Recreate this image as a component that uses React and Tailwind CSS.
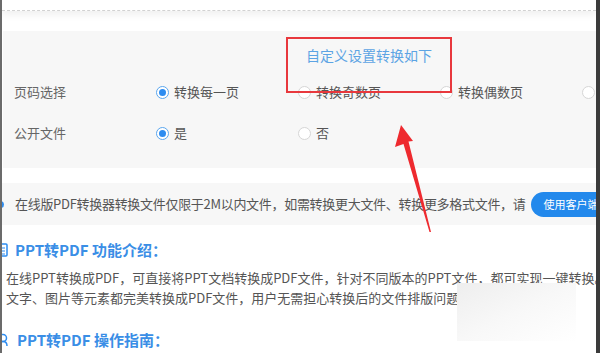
import React from 'react';

const font = { fontFamily: '"Noto Sans CJK SC", "Noto Sans", sans-serif' };

const Radio = ({ checked, label }) => (
  <div className="flex items-center w-[142px] shrink-0">
    <span
      className={`w-[13px] h-[13px] rounded-full border flex items-center justify-center bg-white shrink-0 ${
        checked ? 'border-[#5aa6ee]' : 'border-[#d6d6d6]'
      }`}
    >
      {checked && <span className="w-[7px] h-[7px] rounded-full bg-[#2d8cf0]" />}
    </span>
    <span className="ml-[5px] text-[13px] text-[#555]">{label}</span>
  </div>
);

const Row = ({ label, options }) => (
  <div className="flex items-center h-[30px] pl-[11px]">
    <div className="w-[142px] shrink-0 text-[13px] text-[#666]">{label}</div>
    {options.map((o, i) => (
      <Radio key={i} checked={o.checked} label={o.label} />
    ))}
  </div>
);

const App = () => {
  return (
    <div className="relative w-[600px] h-[353px] overflow-hidden bg-white flex" style={font}>
      <div className="w-[2px] bg-[#6b6b6b] shrink-0" />
      <div className="flex-1 flex flex-col overflow-hidden">
        {/* top strip */}
        <div className="h-[11px] bg-white border-b border-dashed border-[#d2d2d2] shadow-[0_3px_8px_rgba(0,0,0,0.07)] shrink-0" />
        <div className="h-[20px] shrink-0" />

        {/* settings panel */}
        <div className="ml-[1px] h-[137px] bg-[#f7f7f7] shrink-0 pt-[14px]">
          <div className="h-[20px] pl-[303px] text-[14px] leading-[20px] text-[#5ca4e4]">自定义设置转换如下</div>
          <div className="mt-[12px]">
            <Row
              label="页码选择"
              options={[
                { checked: true, label: '转换每一页' },
                { checked: false, label: '转换奇数页' },
                { checked: false, label: '转换偶数页' },
                { checked: false, label: '' },
              ]}
            />
          </div>
          <div className="mt-[11px]">
            <Row
              label="公开文件"
              options={[
                { checked: true, label: '是' },
                { checked: false, label: '否' },
              ]}
            />
          </div>
        </div>

        <div className="h-[15px] shrink-0" />

        {/* notice */}
        <div className="h-[42px] bg-[#f7f7f7] flex items-center shrink-0 overflow-hidden">
          <span className="w-[7px] h-[7px] rounded-full bg-[#2d8cf0] -ml-[5px] shrink-0" />
          <span className="ml-[11px] text-[13px] tracking-[-0.3px] text-[#555] whitespace-nowrap">
            在线版PDF转换器转换文件仅限于2M以内文件，如需转换更大文件、转换更多格式文件，请
          </span>
          <span className="ml-[5px] shrink-0 h-[25px] px-[13px] rounded-full bg-[#2389ec] text-white text-[11px] flex items-center whitespace-nowrap">
            使用客户端
          </span>
        </div>

        {/* section 1 */}
        <div className="mt-[13px] h-[24px] flex items-center shrink-0">
          <svg width="12" height="14" viewBox="0 0 12 14" className="-ml-[6px] shrink-0">
            <rect x="1" y="1" width="10" height="12" rx="1" fill="none" stroke="#2d8cf0" strokeWidth="1.5" />
            <path d="M3 5h6M3 8h6M3 11h6" stroke="#2d8cf0" strokeWidth="1.2" />
          </svg>
          <span className="ml-[7px] text-[15px] font-bold text-[#3a8ee6] whitespace-nowrap">PPT转PDF 功能介绍：</span>
        </div>
        <div className="mt-[6px] pl-[4px] text-[13px] leading-[20px] text-[#555] whitespace-nowrap shrink-0">
          <div>在线PPT转换成PDF，可直接将PPT文档转换成PDF文件，针对不同版本的PPT文件，都可实现一键转换。转换后PPT中的</div>
          <div>文字、图片等元素都完美转换成PDF文件，用户无需担心转换后的文件排版问题。</div>
        </div>

        {/* section 2 */}
        <div className="mt-[20px] h-[24px] flex items-center shrink-0">
          <svg width="12" height="14" viewBox="0 0 12 14" className="-ml-[5px] shrink-0">
            <circle cx="6" cy="5" r="3.5" fill="none" stroke="#2d8cf0" strokeWidth="1.5" />
            <path d="M2 13c0-3 2-4.5 4-4.5s4 1.5 4 4.5" fill="none" stroke="#2d8cf0" strokeWidth="1.5" />
          </svg>
          <span className="ml-[8px] text-[15px] font-bold text-[#3a8ee6] whitespace-nowrap">PPT转PDF 操作指南：</span>
        </div>
      </div>
      <div className="w-[4px] bg-[#3b3b3b] shrink-0" />

      {/* annotation: red box */}
      <div className="absolute left-[286px] top-[37px] w-[166px] h-[56px] border-2 border-[#e8383d]" />

      {/* annotation: arrow */}
      <svg className="absolute left-0 top-0" width="600" height="353" viewBox="0 0 600 353">
        <polygon
          points="401,125 413,141 408.5,141.5 431,232 429.5,232 403.5,144 395,147"
          fill="#ee2a2f"
        />
      </svg>

      {/* erased watermark patch */}
      <div className="absolute left-[457px] top-[283px] w-[119px] h-[58px] bg-gradient-to-br from-[#eeeeee] via-[#f8f8f8] to-white" />
    </div>
  );
};

export default App;
